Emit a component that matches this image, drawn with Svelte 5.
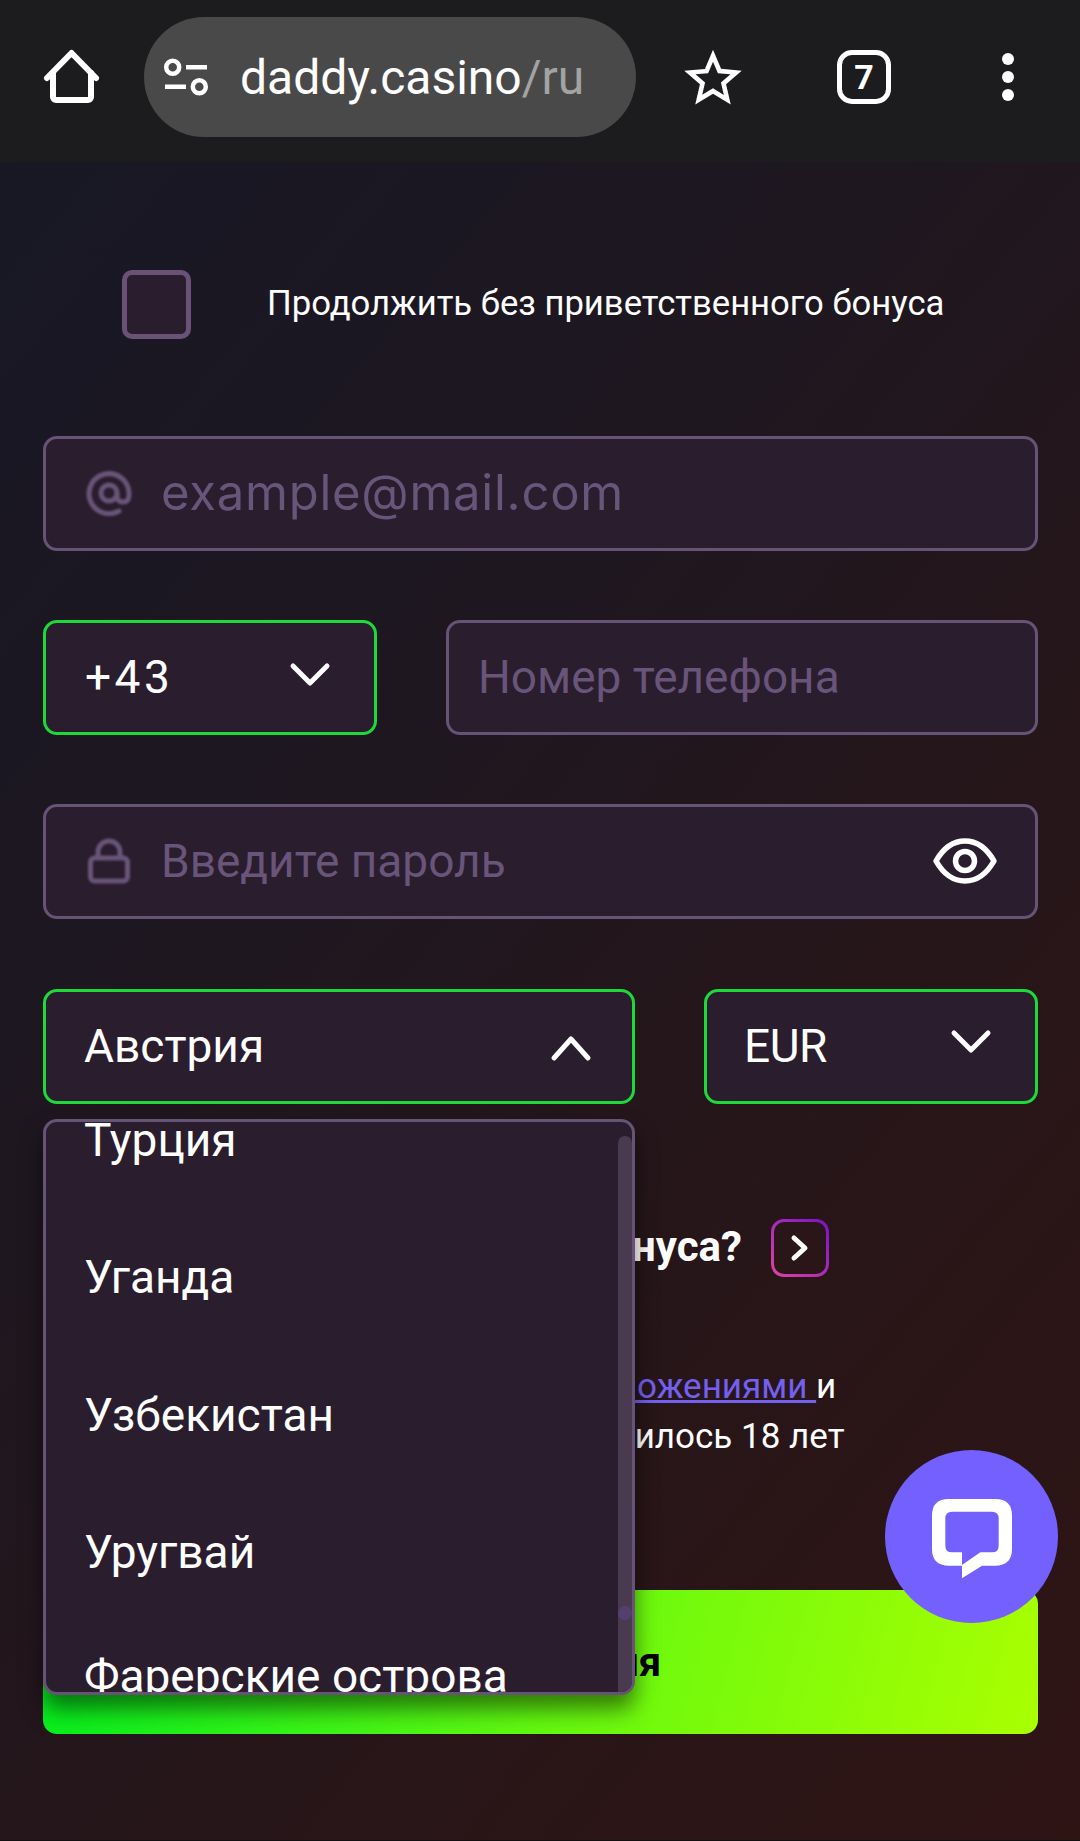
<script>
  const countries = ['Турция', 'Уганда', 'Узбекистан', 'Уругвай', 'Фарерские острова'];
</script>

<div class="page">
  <header class="bar">
    <svg class="home" width="60" height="60" viewBox="0 0 60 60" fill="none" stroke="#fff" stroke-width="6" stroke-linecap="round" stroke-linejoin="round">
      <path d="M5 31 29.500 6 54 31" />
      <path d="M11 26V50a3 3 0 0 0 3 3H46a3 3 0 0 0 3-3V26" />
    </svg>
    <div class="url">
      <svg width="46" height="46" viewBox="0 0 46 46" fill="none" stroke="#fff" stroke-width="4.500">
        <circle cx="9.700" cy="13.300" r="6.500" />
        <circle cx="36.300" cy="32.700" r="6.500" />
        <path d="M23 13.300H44M2 32.700H23" />
      </svg>
      <span class="host">daddy.casino<span class="path">/ru</span></span>
    </div>
    <svg class="star" width="60" height="56" viewBox="1.700 1.700 20.600 19.500" fill="#fff">
      <path fill-rule="evenodd" d="M22 9.240l-7.190-.62L12 2 9.190 8.630 2 9.240l5.460 4.730L5.820 21 12 17.270 18.180 21l-1.630-7.030L22 9.240zM12 15.400l-3.760 2.270 1-4.280-3.320-2.880 4.380-.38L12 6.100l1.710 4.040 4.380.38-3.320 2.880 1 4.280L12 15.400z" />
    </svg>
    <div class="tabs">7</div>
    <div class="dots"><i></i><i></i><i></i></div>
  </header>

  <main class="form">
    <label class="check">
      <span class="box"></span>
      <span class="check-text">Продолжить без приветственного бонуса</span>
    </label>

    <div class="field email">
      <svg class="lead" width="46" height="46" viewBox="0 0 46 46" fill="none" stroke="#6a5579" stroke-width="5" stroke-linecap="round">
        <circle cx="23" cy="23" r="8" />
        <path d="M33 41A20 20 0 1 1 43 23V25Q43 32 37 32 31 32 31 26V23" />
      </svg>
      <span class="placeholder">example@mail.com</span>
    </div>

    <div class="row">
      <div class="field select code">
        <span class="digits">+43</span>
        <svg class="chev" width="44" height="28" viewBox="0 0 44 28" fill="none" stroke="#fff" stroke-width="5" stroke-linecap="round" stroke-linejoin="round"><path d="M5 6 22 23 39 6" /></svg>
      </div>
      <div class="field phone"><span class="placeholder ru">Номер телефона</span></div>
    </div>

    <div class="field password">
      <svg class="lead" width="46" height="46" viewBox="0 0 46 46" fill="none" stroke="#6a5579" stroke-width="5" stroke-linejoin="round">
        <rect x="4.500" y="20" width="37" height="23" rx="4" />
        <path d="M12 20V14a11 11 0 0 1 22 0V20" />
      </svg>
      <span class="placeholder ru">Введите пароль</span>
      <svg class="eye" width="66" height="50" viewBox="0 0 66 50" fill="none" stroke="#fff" stroke-width="5.500">
        <path d="M4 25C12 11 22 5 33 5S54 11 62 25C54 39 44 45 33 45S12 39 4 25Z" stroke-linejoin="round" />
        <circle cx="33" cy="25" r="9.500" />
      </svg>
    </div>

    <div class="row">
      <div class="dropdown">
        <div class="field select country">
          <span>Австрия</span>
          <svg class="chev up" width="44" height="30" viewBox="0 0 44 30" fill="none" stroke="#fff" stroke-width="5" stroke-linecap="round" stroke-linejoin="round"><path d="M5 26 22 7 39 26" /></svg>
        </div>
        <div class="list">
          <ul>
            {#each countries as name}
              <li>{name}</li>
            {/each}
          </ul>
          <div class="track"><b></b></div>
        </div>
      </div>
      <div class="field select currency">
        <span>EUR</span>
        <svg class="chev down" width="44" height="28" viewBox="0 0 44 28" fill="none" stroke="#fff" stroke-width="5" stroke-linecap="round" stroke-linejoin="round"><path d="M5 6 22 23 39 6" /></svg>
      </div>
    </div>

    <div class="promo">
      <strong>Есть промокод бонуса?</strong>
      <span class="arrow">
        <svg width="22" height="30" viewBox="0 0 22 30" fill="none" stroke="#fff" stroke-width="5" stroke-linecap="round" stroke-linejoin="round"><path d="M5 5 16 15 5 25" /></svg>
      </span>
    </div>

    <p class="terms">
      Я согласен с <a href="#rules">Правилами и Положениями&nbsp;</a>и<br />
      подтверждаю, что мне исполнилось 18 лет
    </p>

    <button class="submit">Регистрация</button>
  </main>

  <div class="chat">
    <svg width="80" height="80" viewBox="0 0 240 240" fill="#fff">
      <path fill-rule="evenodd" d="M50 0H190Q240 0 240 50V150Q240 200 190 200H150L90 238V200H50Q0 200 0 150V50Q0 0 50 0ZM60 38H180Q200 38 200 58V140Q200 160 180 160H145L90 198V160H60Q40 160 40 140V58Q40 38 60 38Z" />
    </svg>
  </div>
</div>

<style>
  :global(body) {
    margin: 0;
    background: #1c1b1d;
  }
  .page {
    position: relative;
    height: 1840px;
    overflow: hidden;
    border-bottom: 1px solid #111;
    font-family: Roboto, sans-serif;
    color: #fff;
    background: linear-gradient(130deg, #171826 0%, #1e1720 38%, #2a1516 80%, #2f1414 100%);
  }
  .bar {
    display: flex;
    align-items: center;
    height: 162px;
    padding: 0 0 8px 42px;
    box-sizing: border-box;
    background: #1c1b1d;
  }
  .url {
    display: flex;
    align-items: center;
    width: 492px;
    height: 120px;
    margin-left: 42px;
    padding-left: 19px;
    box-sizing: border-box;
    border-radius: 60px;
    background: #4a4949;
  }
  .host {
    margin-left: 31px;
    font-size: 48px;
    color: #fff;
  }
  .path {
    color: #a3a3a3;
  }
  .star {
    margin-left: 47px;
  }
  .tabs {
    display: flex;
    align-items: center;
    justify-content: center;
    width: 54px;
    height: 54px;
    margin-left: 94px;
    box-sizing: border-box;
    border: 5px solid #fff;
    border-radius: 15px;
    font-size: 34px;
    font-weight: 700;
  }
  .dots {
    display: flex;
    flex-direction: column;
    gap: 6px;
    margin-left: 111px;
  }
  .dots i {
    width: 12px;
    height: 12px;
    border-radius: 50%;
    background: #fff;
  }
  .form {
    display: flex;
    flex-direction: column;
    padding: 108px 42px 0 43px;
  }
  .check {
    display: flex;
    align-items: center;
    gap: 76px;
    margin: 0 0 97px 79px;
    font-size: 34.650px;
  }
  .check-text {
    margin-bottom: 3px;
  }
  .box {
    width: 69px;
    height: 69px;
    box-sizing: border-box;
    border: 5px solid #6a5277;
    border-radius: 10px;
    background: #2a1d2e;
  }
  .field {
    display: flex;
    align-items: center;
    height: 115px;
    padding-bottom: 2px;
    box-sizing: border-box;
    border: 3px solid #665376;
    border-radius: 14px;
    background: #2a1d2e;
    font-size: 46px;
  }
  .row {
    display: flex;
    justify-content: space-between;
    margin-bottom: 69px;
  }
  .row + .password {
    margin-bottom: 70px;
  }
  .email {
    margin-bottom: 69px;
  }
  .email,
  .password {
    padding-left: 40px;
  }
  .lead {
    flex: none;
    filter: blur(1px);
  }
  .placeholder {
    margin-left: 29px;
    color: #69547a;
    font-family: Inter, sans-serif;
    font-size: 49px;
    letter-spacing: 0.750px;
  }
  .placeholder.ru {
    font-family: Roboto, sans-serif;
    font-size: 46px;
    letter-spacing: 0;
  }
  .eye {
    margin-left: auto;
    margin-right: 37px;
  }
  .select {
    justify-content: space-between;
    border-color: #1ed93a;
    padding-left: 38px;
    padding-right: 42px;
  }
  .digits {
    margin-left: 1px;
    letter-spacing: 3.500px;
  }
  .code {
    width: 334px;
  }
  .phone {
    width: 592px;
  }
  .phone .placeholder {
    margin-left: 29px;
  }
  .dropdown {
    position: relative;
    width: 592px;
  }
  .country {
    width: 100%;
  }
  .currency {
    width: 334px;
    padding-left: 37px;
    letter-spacing: -0.500px;
  }
  .chev {
    position: relative;
    top: -3px;
  }
  .chev.up {
    top: 1px;
    left: 3px;
  }
  .chev.down {
    top: -5px;
  }
  .list {
    position: absolute;
    z-index: 2;
    top: 130px;
    left: 0;
    right: 0;
    height: 576px;
    overflow: hidden;
    box-sizing: border-box;
    border: 3px solid #665376;
    border-radius: 14px;
    background: #2a1d2e;
    box-shadow: 0 14px 22px rgba(0, 0, 0, 0.5);
  }
  ul {
    margin: -51px 0 0;
    padding: 0;
    list-style: none;
  }
  li {
    display: flex;
    align-items: center;
    height: 137.500px;
    padding-left: 38px;
    font-size: 46px;
  }
  li:last-child {
    margin-top: -14px;
  }
  .track {
    position: absolute;
    top: 14px;
    right: 0;
    bottom: 0;
    width: 14px;
    border-radius: 7px 7px 0 0;
    background: #4a3a4f;
  }
  .track b {
    position: absolute;
    top: 470px;
    left: 0;
    width: 14px;
    height: 14px;
    border-radius: 50%;
    background: #553f70;
  }
  .promo {
    display: flex;
    align-items: center;
    justify-content: flex-end;
    gap: 29px;
    height: 58px;
    margin-top: 46px;
    padding-right: 209px;
    font-size: 42px;
  }
  .promo strong {
    margin-bottom: 3px;
  }
  .arrow {
    display: flex;
    align-items: center;
    justify-content: center;
    width: 58px;
    height: 58px;
    box-sizing: border-box;
    border: 3px solid transparent;
    border-radius: 13px;
    background: linear-gradient(#2a1618, #2a1618) padding-box,
      linear-gradient(to top right, #de45a0, #7a10cc) border-box;
  }
  .terms {
    margin: 85px 0 0;
    padding-left: 90px;
    font-size: 35px;
    line-height: 50px;
    text-indent: -3px;
  }
  .terms a {
    color: #7360ee;
  }
  .submit {
    height: 144px;
    margin-top: 128px;
    border: 0;
    border-radius: 14px;
    background: linear-gradient(105deg, #00ee1e 0%, #60f810 50%, #aaff00 100%);
    color: #000;
    font-family: Roboto, sans-serif;
    font-size: 40px;
    font-weight: 700;
  }
  .chat {
    position: absolute;
    top: 1450px;
    left: 885px;
    display: flex;
    align-items: center;
    justify-content: center;
    width: 173px;
    height: 173px;
    padding-top: 5px;
    box-sizing: border-box;
    border-radius: 50%;
    background: #7360ff;
  }
</style>
